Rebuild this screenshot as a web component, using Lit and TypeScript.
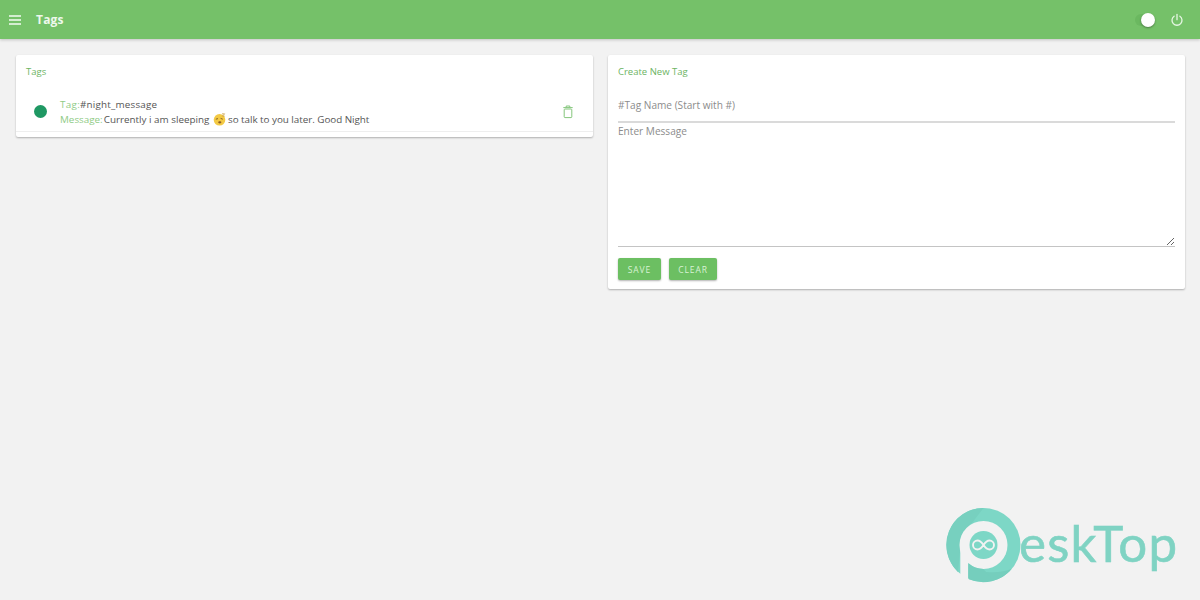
import { LitElement, html, css } from "lit";
import { customElement } from "lit/decorators.js";

@customElement("app-root")
export class AppRoot extends LitElement {
  static styles = css`
    :host { display: block; width: 1200px; height: 600px; position: relative; overflow: hidden; background: #f2f2f2; font-family: "Open Sans", "Noto Sans", sans-serif; color: #555; font-size: 10px; }
    .bar { height: 39px; background: #75c169; box-shadow: 0 1px 3px rgba(0,0,0,.2); display: flex; align-items: center; padding: 0 15px 0 9px; color: #fff; }
    .menu { width: 12px; height: 12px; display: flex; }
    .bar-title { margin-left: 15px; font-size: 12px; font-weight: 700; color: #eef8ec; letter-spacing: .2px; }
    .spacer { flex: 1; }
    .switch { position: relative; width: 20px; height: 12px; background: #6bb860; border-radius: 6px; margin-right: 15px; }
    .knob { position: absolute; left: 6px; top: -1px; width: 14px; height: 14px; background: #fff; border-radius: 50%; box-shadow: 0 1px 2px rgba(0,0,0,.35); }
    .power { display: flex; width: 14px; height: 14px; margin-right: 1px; }
    .cols { display: grid; grid-template-columns: 577px 577px; gap: 15px; padding: 16px 15px 0 16px; align-items: start; }
    .card { background: #fff; border-radius: 2px; box-shadow: 0 1px 2px rgba(0,0,0,.28); padding: 0 10px; }
    .title { color: #6db463; font-size: 9.5px; line-height: 12px; padding-top: 11px; }
    .left { height: 82px; display: flex; flex-direction: column; }
    .row { display: flex; align-items: center; margin-top: 19px; height: 30px; padding-right: 8px; }
    .dot { width: 13px; height: 13px; background: #1f9863; border-radius: 50%; margin: 0 13px 2px 8px; }
    .texts { flex: 1; line-height: 15px; color: #555; font-size: 9.85px; }
    .lab { color: #8fcb86; }
    .lab-tag { letter-spacing: .3px; }
    .tag-name { letter-spacing: .2px; }
    .msg { margin-left: 1px; }
    .emoji { display: inline-block; width: 13px; height: 13px; vertical-align: -3px; margin-left: 1px; margin-right: -.5px; }
    .tail { letter-spacing: -.03px; }
    .trash { width: 14px; height: 14px; display: flex; margin-bottom: 1px; }
    .rule { height: 1px; background: #eeeeee; margin: 4px -10px 0; }
    .right { height: 234px; display: flex; flex-direction: column; }
    input, textarea { display: block; width: 100%; box-sizing: border-box; border: 0; outline: 0; background: transparent; font: inherit; font-size: 10.1px; color: #555; padding: 0; margin: 0; }
    input::placeholder, textarea::placeholder { color: #8c8c8c; opacity: 1; }
    input { height: 27px; margin-top: 18px; line-height: 15px; padding-bottom: 8px; border-bottom: 2px solid #dadada; }
    textarea { height: 124px; padding-top: 1px; line-height: 15px; border-bottom: 1px solid #c4c4c4; }
    .btns { display: flex; gap: 8px; margin-top: 11px; }
    button { height: 22px; border: 0; border-radius: 2px; background: #6cbf62; color: #d9f2d5; font: inherit; font-size: 8.5px; letter-spacing: .9px; box-shadow: 0 1px 2px rgba(0,0,0,.3); padding: 0; }
    .save { width: 43px; }
    .clear { width: 48px; }
    .mark { position: absolute; left: 946px; top: 508px; width: 240px; height: 76px; display: flex; align-items: flex-start; }
    .logo { width: 75px; height: 75px; flex: none; }
    .word { font-family: "Lato", sans-serif; font-size: 51px; line-height: 51px; margin: 9px 0 0 -2px; letter-spacing: 1.250px; color: #7fd3c3; -webkit-text-stroke: .6px #7fd3c3; }
  `;

  render() {
    return html`
      <div class="bar">
        <svg class="menu" viewBox="0 0 12 12"><path d="M0 2h12M0 6h12M0 10h12" stroke="#f4fbf3" stroke-width="1.3" fill="none"/></svg>
        <div class="bar-title">Tags</div>
        <div class="spacer"></div>
        <div class="switch"><div class="knob"></div></div>
        <svg class="power" viewBox="0 0 14 14" fill="none" stroke="#e6f6e3" stroke-width="1.3" stroke-linecap="round"><path d="M7 1.500v5.200"/><path d="M4.100 3.200a5 5 0 1 0 5.800 0"/></svg>
      </div>
      <div class="cols">
        <div class="card left">
          <div class="title">Tags</div>
          <div class="row">
            <div class="dot"></div>
            <div class="texts">
              <div><span class="lab lab-tag">Tag:</span><span class="tag-name">#night_message</span></div>
              <div><span class="lab">Message:</span><span class="msg">Currently i am sleeping</span>
                <svg class="emoji" viewBox="0 0 13 13"><circle cx="6.500" cy="6.800" r="5.800" fill="#f3c944"/><path d="M2.800 6.200l2.200-.6M7.600 5.400l2.200.8" stroke="#7a5a20" stroke-width=".9" fill="none"/><ellipse cx="6.800" cy="9.300" rx="1.600" ry="1.100" fill="#8a5a28"/><path d="M9 .8h2.600L9.400 3.200h2.400" stroke="#c9a24a" stroke-width=".8" fill="none"/></svg>
                <span class="tail">so talk to you later. Good Night</span></div>
            </div>
            <svg class="trash" viewBox="0 0 14 14" fill="none" stroke="#85c67c" stroke-width="1"><path d="M2.300 2.600h9.400M5.200 2.400V1h3.600v1.400"/><rect x="3.200" y="4" width="7.600" height="8.600" rx=".8"/></svg>
          </div>
          <div class="rule"></div>
        </div>
        <div class="card right">
          <div class="title">Create New Tag</div>
          <input placeholder="#Tag Name (Start with #)" />
          <textarea placeholder="Enter Message"></textarea>
          <div class="btns">
            <button class="save">SAVE</button>
            <button class="clear">CLEAR</button>
          </div>
        </div>
      </div>
      <div class="mark">
        <svg class="logo" viewBox="0 0 75 75">
          <circle cx="37.500" cy="37" r="37" fill="#7dd7c6"/>
          <path d="M37.500 0A37 37 0 0 0 12 64L14.700 37A25 25 0 0 1 26 15Z" fill="#77d0bf"/>
          <path d="M22.300 58L22.300 71A37 37 0 0 0 66 60.500C54 66 36 66 22.300 58Z" fill="#75cebd"/>
          <circle cx="37.500" cy="37" r="24" fill="#f2f2f2"/>
          <path d="M14.300 37H22.300V74H14.300Z" fill="#f2f2f2"/>
          <path d="M22.300 55A24 24 0 0 0 37.500 61L45 70H22.300Z" fill="#75cebd"/>
          <circle cx="37.500" cy="37" r="14" fill="#7dd7c6"/>
          <path d="M37.500 37c-2-3-4-4.500-6-4.500a4.500 4.500 0 0 0 0 9c2 0 4-1.500 6-4.500c2-3 4-4.500 6-4.500a4.500 4.500 0 0 1 0 9c-2 0-4-1.500-6-4.500z" fill="none" stroke="#f2f2f2" stroke-width="1.900"/>
        </svg>
        <div class="word">eskTop</div>
      </div>
    `;
  }
}
